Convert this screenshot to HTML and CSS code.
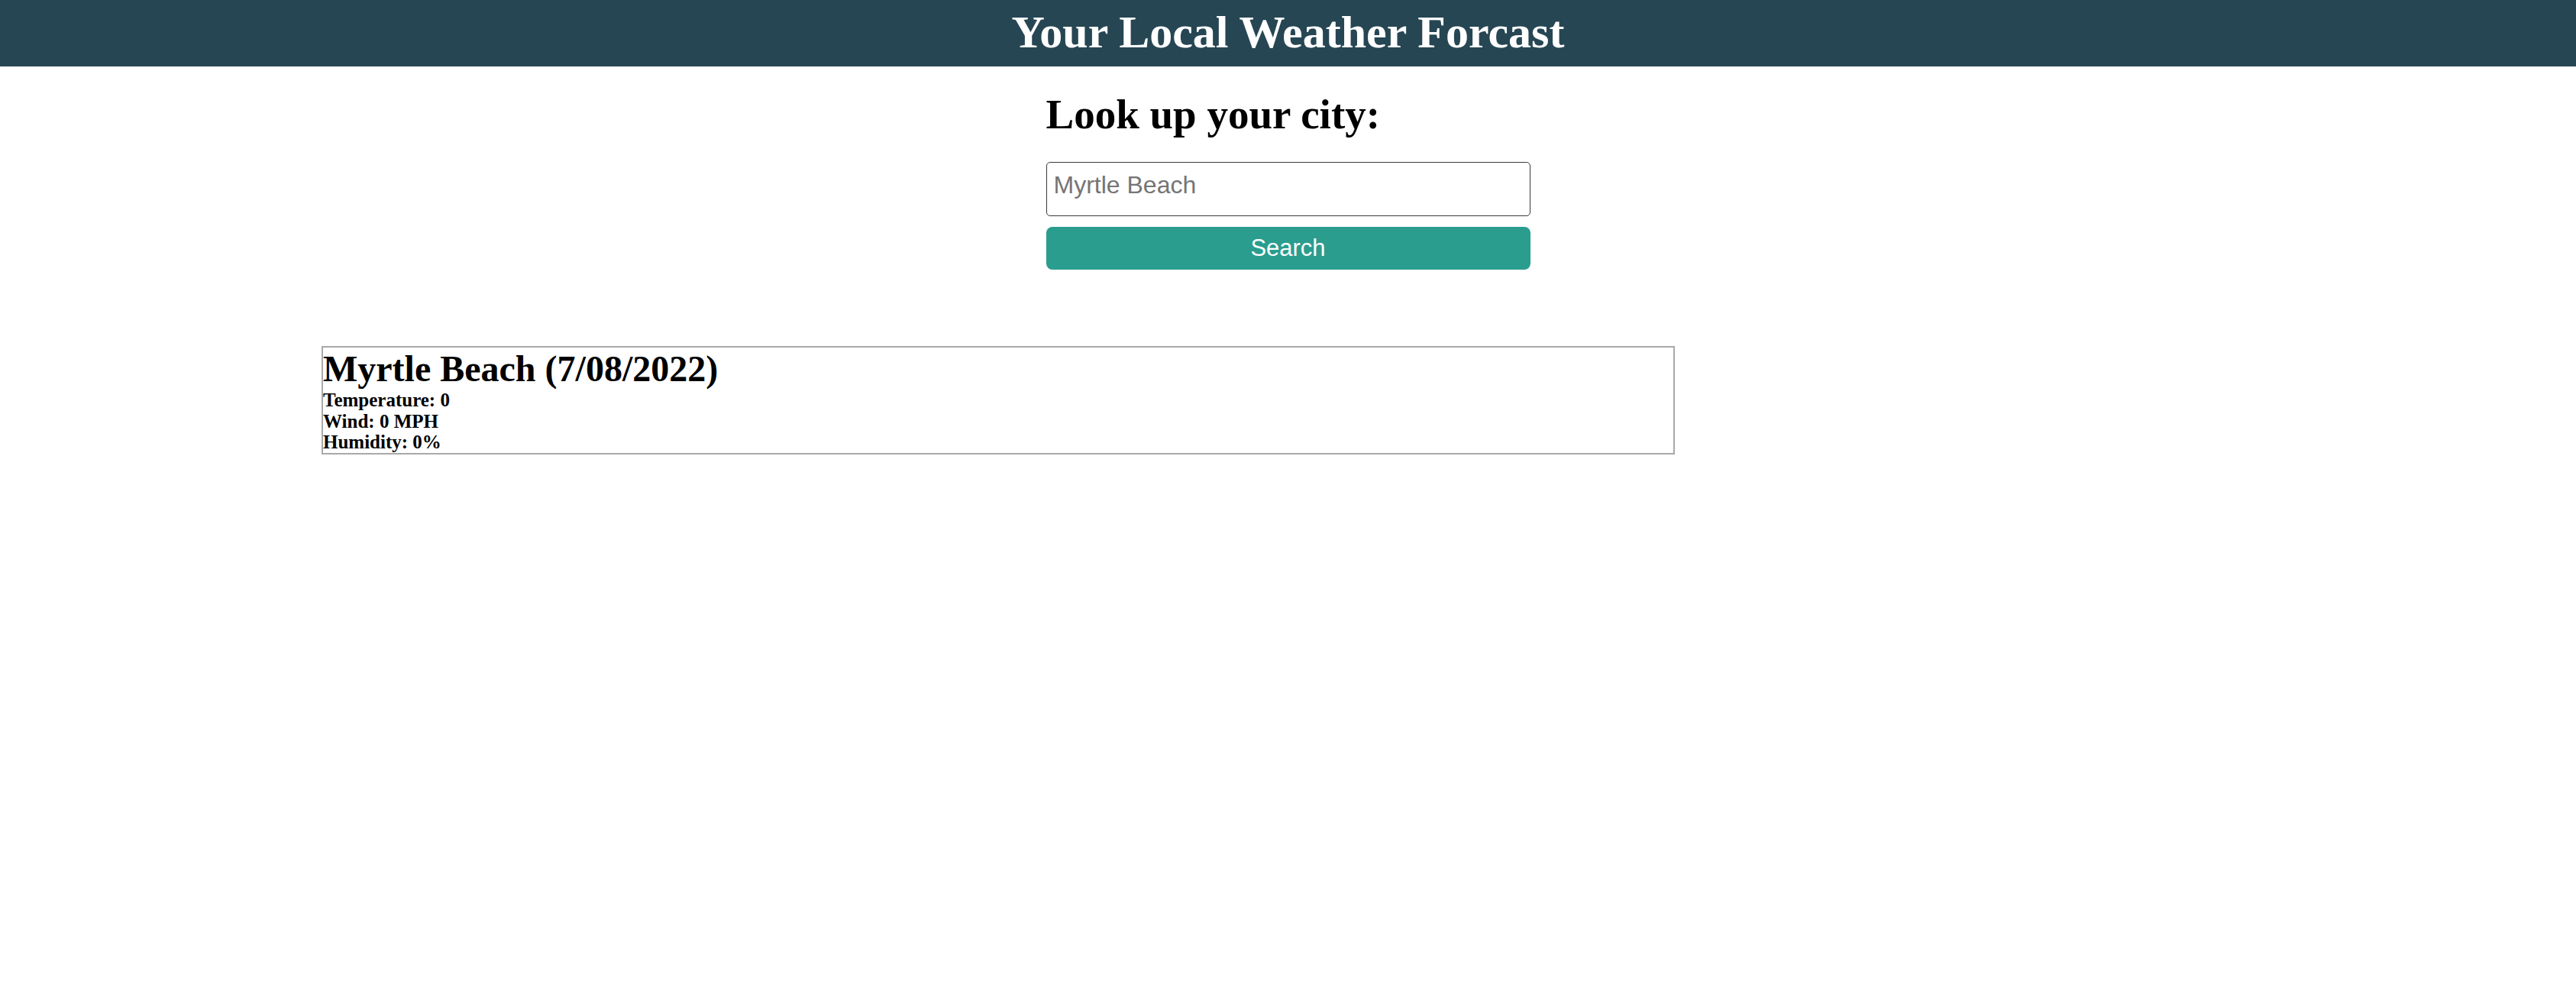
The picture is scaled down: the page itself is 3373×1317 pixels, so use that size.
FILE: index.html
```html
<!DOCTYPE html>
<html lang="en">
<head>
<meta charset="utf-8">
<title>Weather Dashboard</title>
<link rel="stylesheet" href="styles.css">
</head>
<body>
<header class="site-header">
  <h1 class="site-title">Your Local Weather Forcast</h1>
</header>
<main class="page">
  <section class="search">
    <h2 class="search-title">Look up your city:</h2>
    <input class="search-input" type="text" placeholder="Myrtle Beach">
    <button class="search-btn" type="button">Search</button>
  </section>
  <section class="results">
    <div class="card">
      <h3 class="card-title">Myrtle Beach (7/08/2022)</h3>
      <p class="card-line">Temperature: 0</p>
      <p class="card-line">Wind: 0 MPH</p>
      <p class="card-line">Humidity: 0%</p>
    </div>
  </section>
</main>
</body>
</html>
```
FILE: styles.css
```css
* { box-sizing: border-box; }
html, body { margin: 0; padding: 0; background: #ffffff; }
body { font-family: "Liberation Serif", "Times New Roman", serif; color: #000; }

.site-header {
  background: #264653;
  height: 87px;
  padding-top: 8px;
  text-align: center;
}
.site-title {
  margin: 0;
  color: #ffffff;
  font-size: 60px;
  font-weight: bold;
  line-height: normal;
}

.search {
  width: 634px;
  margin: 0 auto;
  display: flex;
  flex-direction: column;
}
.search-title {
  margin: 31px 0 31px;
  font-size: 55px;
  font-weight: bold;
  line-height: normal;
}
.search-input {
  height: 71px;
  border: 1px solid #3a3a3a;
  border-radius: 5px;
  padding: 0 0 10px 9px;
  font-family: "Liberation Sans", Arial, sans-serif;
  font-size: 32px;
  color: #000;
}
.search-input::placeholder { color: #757575; }
.search-btn {
  margin-top: 14px;
  height: 56px;
  border: none;
  border-radius: 8px;
  background: #2a9d8f;
  color: #ffffff;
  font-family: "Liberation Sans", Arial, sans-serif;
  font-size: 31px;
  padding: 0;
}

.results {
  margin-top: 100px;
  padding-left: 421px;
}
.card {
  width: 1772px;
  border: 2px solid #a9a9a9;
}
.card-title {
  margin: 0;
  font-size: 48px;
  font-weight: bold;
  line-height: normal;
}
.card-line {
  margin: 0;
  font-size: 25px;
  font-weight: bold;
  line-height: 27.5px;
}
```
